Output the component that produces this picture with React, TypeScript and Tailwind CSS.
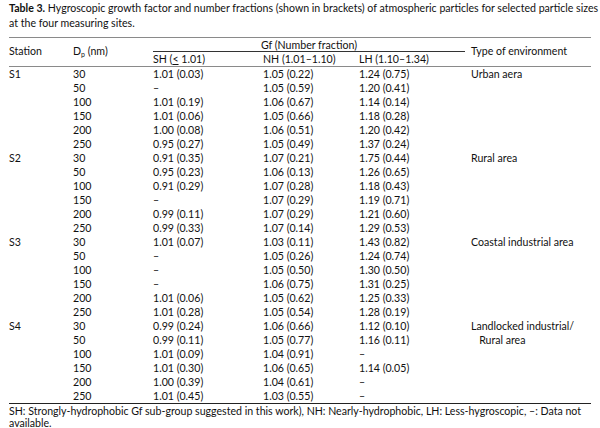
import React from 'react';

type Row = [string, string, string, string, string, string];

const groups: { station: string; rows: Row[] }[] = [
  {
    station: 'S1',
    rows: [
      ['S1', '30', '1.01 (0.03)', '1.05 (0.22)', '1.24 (0.75)', 'Urban aera'],
      ['', '50', '–', '1.05 (0.59)', '1.20 (0.41)', ''],
      ['', '100', '1.01 (0.19)', '1.06 (0.67)', '1.14 (0.14)', ''],
      ['', '150', '1.01 (0.06)', '1.05 (0.66)', '1.18 (0.28)', ''],
      ['', '200', '1.00 (0.08)', '1.06 (0.51)', '1.20 (0.42)', ''],
      ['', '250', '0.95 (0.27)', '1.05 (0.49)', '1.37 (0.24)', ''],
    ],
  },
  {
    station: 'S2',
    rows: [
      ['S2', '30', '0.91 (0.35)', '1.07 (0.21)', '1.75 (0.44)', 'Rural area'],
      ['', '50', '0.95 (0.23)', '1.06 (0.13)', '1.26 (0.65)', ''],
      ['', '100', '0.91 (0.29)', '1.07 (0.28)', '1.18 (0.43)', ''],
      ['', '150', '–', '1.07 (0.29)', '1.19 (0.71)', ''],
      ['', '200', '0.99 (0.11)', '1.07 (0.29)', '1.21 (0.60)', ''],
      ['', '250', '0.99 (0.33)', '1.07 (0.14)', '1.29 (0.53)', ''],
    ],
  },
  {
    station: 'S3',
    rows: [
      ['S3', '30', '1.01 (0.07)', '1.03 (0.11)', '1.43 (0.82)', 'Coastal industrial area'],
      ['', '50', '–', '1.05 (0.26)', '1.24 (0.74)', ''],
      ['', '100', '–', '1.05 (0.50)', '1.30 (0.50)', ''],
      ['', '150', '–', '1.06 (0.75)', '1.31 (0.25)', ''],
      ['', '200', '1.01 (0.06)', '1.05 (0.62)', '1.25 (0.33)', ''],
      ['', '250', '1.01 (0.28)', '1.05 (0.54)', '1.28 (0.19)', ''],
    ],
  },
  {
    station: 'S4',
    rows: [
      ['S4', '30', '0.99 (0.24)', '1.06 (0.66)', '1.12 (0.10)', 'Landlocked industrial/'],
      ['', '50', '0.99 (0.11)', '1.05 (0.77)', '1.16 (0.11)', '   Rural area'],
      ['', '100', '1.01 (0.09)', '1.04 (0.91)', '–', ''],
      ['', '150', '1.01 (0.30)', '1.06 (0.65)', '1.14 (0.05)', ''],
      ['', '200', '1.00 (0.39)', '1.04 (0.61)', '–', ''],
      ['', '250', '1.01 (0.45)', '1.03 (0.55)', '–', ''],
    ],
  },
];

const cols = 'grid grid-cols-[64px_80px_110px_96px_112px_1fr]';

export default function App() {
  return (
    <div className="w-[600px] h-[428px] bg-white text-[#111] px-[9px] pt-[1px] font-['Lato','Liberation_Sans',sans-serif] text-[10.6px] overflow-hidden">
      <p className="leading-[15px] whitespace-nowrap">
        <span className="font-bold">Table 3.</span> Hygroscopic growth factor and number fractions (shown in brackets) of atmospheric particles for selected particle sizes
        <br />
        at the four measuring sites.
      </p>

      <div className="mt-[6px] border-t-[1.5px] border-[#8a8a8a]">
        {/* header */}
        <div className={`${cols} border-b-[1.5px] border-[#8a8a8a]`}>
          <div className="row-span-2 flex items-center">Station</div>
          <div className="row-span-2 flex items-center">
            <span>
              D<sub className="text-[7px]">p</sub> (nm)
            </span>
          </div>
          <div className="col-span-3 text-center leading-[12px] pt-[1px] border-b border-[#333] mr-[6px]">Gf (Number fraction)</div>
          <div className="row-span-2 flex items-center">Type of environment</div>
          <div className="leading-[14px]">SH (<span className="underline">&lt;</span> 1.01)</div>
          <div className="leading-[14px]">NH (1.01–1.10)</div>
          <div className="leading-[14px]">LH (1.10–1.34)</div>
        </div>

        {/* body */}
        <div className="border-b border-[#222]">
          {groups.map((g) =>
            g.rows.map((r, i) => (
              <div key={g.station + i} className={`${cols} h-[14px] leading-[14px]`}>
                {r.map((c, j) => (
                  <div key={j} className="whitespace-pre">
                    {c}
                  </div>
                ))}
              </div>
            ))
          )}
        </div>
      </div>

      <p className="leading-[12px] pt-[1px]">
        SH: Strongly-hydrophobic Gf sub-group suggested in this work), NH: Nearly-hydrophobic, LH: Less-hygroscopic, –: Data not
        <br />
        available.
      </p>
    </div>
  );
}
